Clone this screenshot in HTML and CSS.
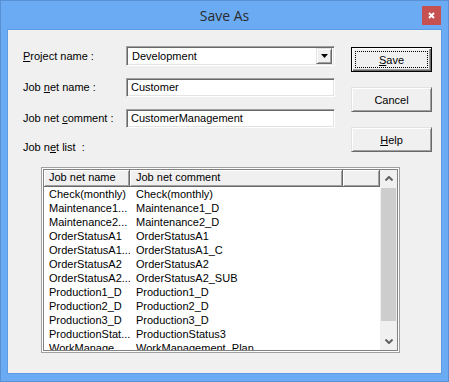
FILE: index.html
```html
<!DOCTYPE html>
<html lang="en">
<head>
    <meta charset="UTF-8">
    <title>Save As</title>
    <link rel="stylesheet" href="styles.css">
</head>
<body>
    <div class="window">
        <div class="titlebar">
            <span></span>
            <div class="title">Save As</div>
            <button class="close-btn" type="button">
                <svg width="7" height="7" viewBox="0 0 7 7">
                    <path d="M1 1 L6 6 M6 1 L1 6" stroke="#fff" stroke-width="2" fill="none"/>
                </svg>
            </button>
        </div>

        <div class="client">
            <div class="top">
                <div class="fields-col">
                    <div class="fields">
                        <label class="label"><u>P</u>roject name :</label>
                        <div class="combo">
                            <span class="combo-text">Development</span>
                            <span class="combo-btn">
                                <svg width="7" height="4" viewBox="0 0 7 4">
                                    <path d="M0 0 H7 L3.5 4 Z" fill="#000"/>
                                </svg>
                            </span>
                        </div>

                        <label class="label">Job <u>n</u>et name :</label>
                        <div class="textbox">Customer</div>

                        <label class="label">Job net <u>c</u>omment :</label>
                        <div class="textbox">CustomerManagement</div>
                    </div>
                    <div class="label list-label">Job n<u>e</u>t list &nbsp;:</div>
                </div>

                <div class="buttons">
                    <button class="btn btn-default" type="button"><span class="focus"><u>S</u>ave</span></button>
                    <button class="btn" type="button">Cancel</button>
                    <button class="btn" type="button"><u>H</u>elp</button>
                </div>
            </div>

            <div class="list">
                <div class="list-inner">
                    <div class="list-view">
                        <div class="list-head">
                            <div class="head-cell">Job net name</div>
                            <div class="head-cell">Job net comment</div>
                            <div class="head-cell"></div>
                        </div>
                        <div class="list-body" id="listBody"></div>
                    </div>
                    <div class="scrollbar">
                        <div class="sb-arrow">
                            <svg width="8" height="5" viewBox="0 0 8 5">
                                <path d="M0.5 4.5 L4 1 L7.5 4.5" stroke="#606060" stroke-width="2" fill="none"/>
                            </svg>
                        </div>
                        <div class="sb-track">
                            <div class="sb-thumb"></div>
                        </div>
                        <div class="sb-arrow">
                            <svg width="8" height="5" viewBox="0 0 8 5">
                                <path d="M0.5 0.5 L4 4 L7.5 0.5" stroke="#606060" stroke-width="2" fill="none"/>
                            </svg>
                        </div>
                    </div>
                </div>
            </div>
        </div>
    </div>

    <script>
        // Список сетей заданий
        const jobNets = [
            ['Check(monthly)', 'Check(monthly)'],
            ['Maintenance1...', 'Maintenance1_D'],
            ['Maintenance2...', 'Maintenance2_D'],
            ['OrderStatusA1', 'OrderStatusA1'],
            ['OrderStatusA1...', 'OrderStatusA1_C'],
            ['OrderStatusA2', 'OrderStatusA2'],
            ['OrderStatusA2...', 'OrderStatusA2_SUB'],
            ['Production1_D', 'Production1_D'],
            ['Production2_D', 'Production2_D'],
            ['Production3_D', 'Production3_D'],
            ['ProductionStat...', 'ProductionStatus3'],
            ['WorkManage...', 'WorkManagement_Plan']
        ];

        const body = document.getElementById('listBody');
        jobNets.forEach(([name, comment]) => {
            const row = document.createElement('div');
            row.className = 'list-row';
            row.innerHTML = '<span class="cell">' + name + '</span><span class="cell">' + comment + '</span>';
            body.appendChild(row);
        });
    </script>
</body>
</html>
```

FILE: styles.css
```css
:root {
    --frame: #6aabf4;
    --frame-edge: #5791d4;
    --face: #f0f0f0;
    --shadow: #a0a0a0;
    --dark-shadow: #696969;
}

* {
    margin: 0;
    padding: 0;
    box-sizing: border-box;
}

body {
    font-family: 'Liberation Sans', Arial, sans-serif;
    font-size: 11px;
    color: #000;
    background: var(--frame);
}

.window {
    width: 449px;
    height: 382px;
    background: var(--frame);
    border: 1px solid var(--frame-edge);
    display: flex;
    flex-direction: column;
}

/* Заголовок окна */
.titlebar {
    height: 28px;
    display: grid;
    grid-template-columns: 1fr auto 1fr;
    align-items: start;
}

.title {
    font-family: 'Open Sans', sans-serif;
    font-size: 14px;
    color: #2b2b2b;
    line-height: 20px;
    padding-top: 5px;
}

.close-btn {
    justify-self: end;
    width: 19px;
    height: 19px;
    margin: 5px 7px 0 0;
    background: #c75050;
    border: none;
    display: flex;
    align-items: center;
    justify-content: center;
}

/* Клиентская область */
.client {
    margin: 0 6px;
    height: 345px;
    background: var(--face);
    border: 1px solid #5d9be3;
    padding: 16px 8px 0 15px;
}

.top {
    display: flex;
    gap: 16px;
}

.fields {
    display: grid;
    grid-template-columns: 103px 209px;
    grid-template-rows: 20px 19px 19px;
    row-gap: 12px;
    align-items: center;
}

.label {
    line-height: 19px;
    white-space: nowrap;
}

.list-label {
    margin-top: 10px;
}

.combo,
.textbox {
    height: 100%;
    background: #fff;
    border: 1px solid;
    border-color: var(--shadow) #fff #fff var(--shadow);
    box-shadow: inset 1px 1px var(--dark-shadow), inset -1px -1px #e3e3e3;
}

.textbox {
    padding: 0 4px;
    line-height: 17px;
}

.combo {
    display: flex;
    align-items: center;
    padding: 1px 2px 1px 1px;
}

.combo-text {
    flex: 1;
    padding-left: 4px;
}

.combo-btn {
    width: 16px;
    height: 16px;
    background: var(--face);
    border: 1px solid;
    border-color: #e3e3e3 var(--dark-shadow) var(--dark-shadow) #e3e3e3;
    box-shadow: inset 1px 1px #fff, inset -1px -1px var(--shadow);
    display: flex;
    align-items: center;
    justify-content: center;
}

/* Кнопки */
.buttons {
    display: flex;
    flex-direction: column;
    gap: 15px;
    padding-top: 1px;
}

.btn {
    width: 81px;
    height: 25px;
    font-family: 'Liberation Sans', Arial, sans-serif;
    font-size: 11px;
    color: #000;
    background: var(--face);
    border: 1px solid;
    border-color: #e3e3e3 var(--dark-shadow) var(--dark-shadow) #e3e3e3;
    box-shadow: inset 1px 1px #fff, inset -1px -1px var(--shadow);
}

.btn-default {
    border-color: #000;
    box-shadow: inset 1px 1px #fff, inset -1px -1px var(--dark-shadow), inset -2px -2px var(--shadow);
    padding: 3px;
    display: flex;
}

.btn-default .focus {
    flex: 1;
    border: 1px dotted #000;
    display: flex;
    align-items: center;
    justify-content: center;
}

/* Список сетей заданий */
.list {
    width: 359px;
    height: 186px;
    margin: 10px 0 0 18px;
    border: 1px solid var(--shadow);
    padding: 1px;
    background: #fff;
}

.list-inner {
    height: 100%;
    border: 1px solid #828282;
    display: flex;
    overflow: hidden;
}

.list-view {
    flex: 1;
    background: #fff;
    overflow: hidden;
}

.list-head,
.list-row {
    display: grid;
    grid-template-columns: 86px 213px 1fr;
}

.head-cell {
    height: 17px;
    line-height: 15px;
    padding-left: 5px;
    background: var(--face);
    border-right: 1px solid var(--dark-shadow);
    border-bottom: 1px solid var(--dark-shadow);
    box-shadow: inset 1px 1px #fff, inset -1px -1px var(--shadow);
    white-space: nowrap;
}

.head-cell:nth-child(2) {
    padding-left: 6px;
}

.list-row {
    height: 14px;
    line-height: 14px;
}

.cell {
    padding-left: 5px;
    white-space: nowrap;
    overflow: hidden;
}

.cell:nth-child(2) {
    padding-left: 6px;
}

.scrollbar {
    width: 17px;
    background: var(--face);
    display: flex;
    flex-direction: column;
}

.sb-arrow {
    height: 17px;
    display: flex;
    align-items: center;
    justify-content: center;
}

.sb-track {
    flex: 1;
    padding: 1px 1px 12px;
}

.sb-thumb {
    height: 133px;
    background: #cdcdcd;
}
```
